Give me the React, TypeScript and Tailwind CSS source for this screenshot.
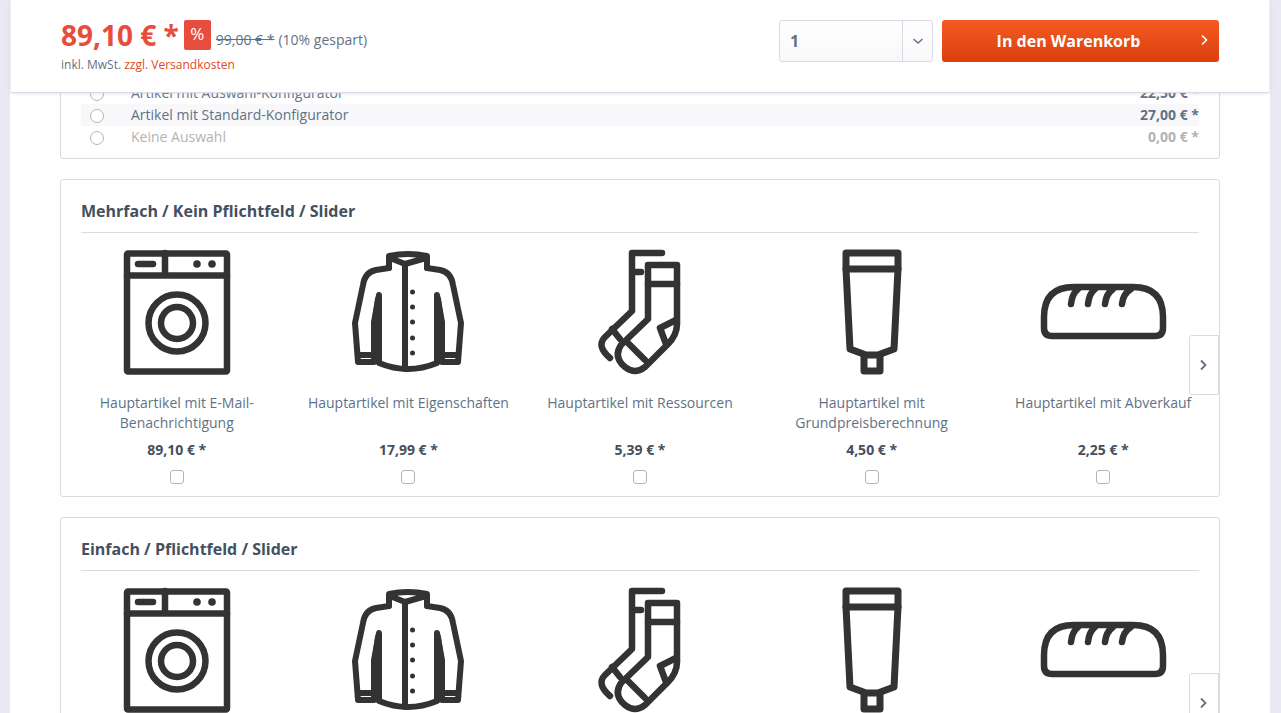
const S = "fill-none stroke-[#333333] [stroke-linecap:round] [stroke-linejoin:round]";

function Washer() {
  return (
    <svg viewBox="0 0 130 130" className="w-[130px] h-[130px]">
      <g className={S} strokeWidth={6.5}>
        <rect x={15} y={6.5} width={100} height={118} rx={1} />
        <path d="M15 28.5H115M53 6V28.5M26 17H41" />
        <circle cx={65} cy={76} r={28.5} />
        <circle cx={65} cy={76} r={16} />
      </g>
      <circle cx={85} cy={17} r={3.8} fill="#333333" />
      <circle cx={100} cy={17} r={3.8} fill="#333333" />
    </svg>
  );
}

function Shirt() {
  return (
    <svg viewBox="0 0 130 130" className="w-[130px] h-[130px]">
      <g className={S} strokeWidth={6}>
        <path d="M46 21V9Q65 5 84 9V21M47 11L62 17L83 11M62 17V122" />
        <path d="M46 21L33 23Q22 25 20 38L12 76L15 115H31V75L36 48V116Q65 128 94 116V48L99 75V115H115L118 76L110 38Q108 25 97 23L84 21" />
        <path d="M35 52L32 74M95 52L98 74" />
        <path d="M15 108H31M99 108H115" />
      </g>
      {[45, 60, 75, 91, 106].map((y) => (
        <circle key={y} cx={69.5} cy={y} r={2.5} fill="#333333" />
      ))}
    </svg>
  );
}

function Socks() {
  return (
    <svg viewBox="0 0 130 130" className="w-[130px] h-[130px]">
      <g className={S} strokeWidth={6.5}>
        <path d="M87 6H57V64L30 90Q21 99 35 111M57 25H66M37 82L45 92" />
        <path d="M73 18H102V74Q103 88 92 98L70 120Q60 128 50 120Q38 110 46 98L73 72Z" />
        <path d="M73 37H102M53 96L70 113M85 81L101 73M85 81L91 97" />
      </g>
    </svg>
  );
}

function Tube() {
  return (
    <svg viewBox="0 0 130 130" className="w-[130px] h-[130px]">
      <g className={S} strokeWidth={7}>
        <path d="M39 6H91V22L87 102L71 108H59L43 102L39 22Z" />
        <path d="M39 22H91" />
        <path d="M57 109V124H73V109" />
      </g>
    </svg>
  );
}

function Bread() {
  return (
    <svg viewBox="0 0 130 130" className="w-[130px] h-[130px]">
      <g className={S} strokeWidth={6.5}>
        <path d="M14 89H117Q125 89 125 81V70Q125 40 95 40H36Q6 40 6 70V81Q6 89 14 89Z" />
        <path d="M33 57Q34 47 40 42M50 57Q51 47 57 42M67 57Q68 47 75 42M84 57Q85 47 93 42" />
      </g>
    </svg>
  );
}

const items = [
  { Icon: Washer, name: "Hauptartikel mit E-Mail-Benachrichtigung", price: "89,10 € *" },
  { Icon: Shirt, name: "Hauptartikel mit Eigenschaften", price: "17,99 € *" },
  { Icon: Socks, name: "Hauptartikel mit Ressourcen", price: "5,39 € *" },
  { Icon: Tube, name: "Hauptartikel mit Grundpreisberechnung", price: "4,50 € *" },
  { Icon: Bread, name: "Hauptartikel mit Abverkauf", price: "2,25 € *" },
];

function Chevron({ className, d = "M3 1.5L7.5 6L3 10.5", w = 1.4 }: { className: string; d?: string; w?: number }) {
  return (
    <svg viewBox="0 0 12 12" className={className}>
      <path d={d} fill="none" stroke="currentColor" strokeWidth={w} />
    </svg>
  );
}

function Radio() {
  return <span className="w-[14px] h-[14px] rounded-full border border-[#b5b5b5] bg-white shrink-0 mt-[1px]" />;
}

function Row({ label, price, bg, muted }: { label: string; price: string; bg?: boolean; muted?: boolean }) {
  return (
    <div className={`flex items-center h-[22px] pl-[9px] ${bg ? "bg-[#f8f8fa]" : ""} ${muted ? "text-[#b3b3b3]" : "text-[#5f7285]"}`}>
      <Radio />
      <span className="ml-[27px] pb-[2px] text-[14px]">{label}</span>
      <span className={`ml-auto pb-[2px] text-[14px] font-bold ${muted ? "text-[#b3b3b3]" : "text-[#5f7285]"}`}>{price}</span>
    </div>
  );
}

function Slider({ title, iconsOnly }: { title: string; iconsOnly?: boolean }) {
  return (
    <section className="relative border border-[#dadae5] rounded-[3px] bg-white h-[318px] px-[20px] pt-[19px] overflow-hidden shrink-0">
      <h2 className="text-[16px] leading-[24px] font-bold text-[#44505e] pb-[8px] h-[34px] border-b border-[#dadae5]">
        {title}
      </h2>
      <div className="-mx-[20px] grid grid-cols-5">
        {items.map(({ Icon, name, price }) => (
          <div key={name} className="flex flex-col items-center">
            <div className="mt-[14px] h-[130px]">
              <Icon />
            </div>
            {!iconsOnly && (
              <>
                <div className="mt-[16px] h-[40px] w-[212px] text-center text-[14px] leading-[20px] text-[#5f7285]">
                  {name}
                </div>
                <div className="mt-[7px] text-[14px] leading-[20px] font-bold text-[#44505e]">{price}</div>
                <span className="mt-[10px] w-[14px] h-[14px] rounded-[3px] border border-[#b5b5b5] bg-white" />
              </>
            )}
          </div>
        ))}
      </div>
      <div className="absolute right-0 top-[155px] w-[30px] h-[60px] bg-white border border-[#dadae5] rounded-l-[3px] flex items-center justify-center text-[#5f7285]">
        <Chevron className="w-[12px] h-[12px]" w={1.8} />
      </div>
    </section>
  );
}

export default function App() {
  return (
    <div className="relative h-[713px] overflow-hidden bg-[#e9e9f3] pl-[10px] pr-[11px] font-['Open_Sans',sans-serif]">
      <header className="absolute z-10 left-[11px] right-[12px] top-0 h-[93px] bg-white border-b border-[#dadae5] shadow-[0_0_4px_rgba(190,190,210,0.6)] flex justify-between pl-[50px] pr-[50px] pt-[20px]">
        <div>
          <div className="flex items-center h-[30px]">
            <span className="text-[28px] font-bold leading-[30px] text-[#e74c3c]">89,10 € *</span>
            <span className="ml-[5px] w-[27px] h-[30px] pb-[2px] rounded-[2px] bg-[#e74c3c] text-white text-[17px] flex items-center justify-center">%</span>
            <span className="ml-[5px] mt-[8px] text-[14px] text-[#5f7285] line-through">99,00 € *</span>
            <span className="ml-[4px] mt-[8px] text-[14px] text-[#5f7285]">(10% gespart)</span>
          </div>
          <div className="mt-[6px] text-[12px] leading-[18px] text-[#5f7285]">
            inkl. MwSt. <span className="text-[#e1491d]">zzgl. Versandkosten</span>
          </div>
        </div>
        <div className="flex gap-[9px]">
          <div className="w-[154px] h-[42px] flex rounded-[3px] border border-[#dadae5] bg-gradient-to-b from-white to-[#f8f8fa] text-[#5f7285]">
            <span className="flex-1 pl-[10px] text-[16px] leading-[40px] font-bold">1</span>
            <span className="w-[30px] border-l border-[#dadae5] flex items-center justify-center">
              <Chevron className="w-[12px] h-[12px]" d="M1.5 4L6 8L10.5 4" w={1.4} />
            </span>
          </div>
          <button className="relative w-[277px] h-[42px] pr-[24px] rounded-[3px] bg-gradient-to-b from-[#f65a24] to-[#d9400b] text-white text-[16px] font-bold">
            In den Warenkorb
            <Chevron className="absolute right-[8px] top-[14px] w-[12px] h-[12px]" w={1.6} />
          </button>
        </div>
      </header>
      <main className="bg-white h-full flex flex-col gap-[20px] pt-[50px] px-[50px]">
        <section className="border border-[#dadae5] rounded-[3px] h-[109px] pt-[31px] px-[20px] pb-[10px] shrink-0">
          <Row label="Artikel mit Auswahl-Konfigurator" price="22,50 € *" />
          <Row label="Artikel mit Standard-Konfigurator" price="27,00 € *" bg />
          <Row label="Keine Auswahl" price="0,00 € *" muted />
        </section>
        <Slider title="Mehrfach / Kein Pflichtfeld / Slider" />
        <Slider title="Einfach / Pflichtfeld / Slider" iconsOnly />
      </main>
    </div>
  );
}
